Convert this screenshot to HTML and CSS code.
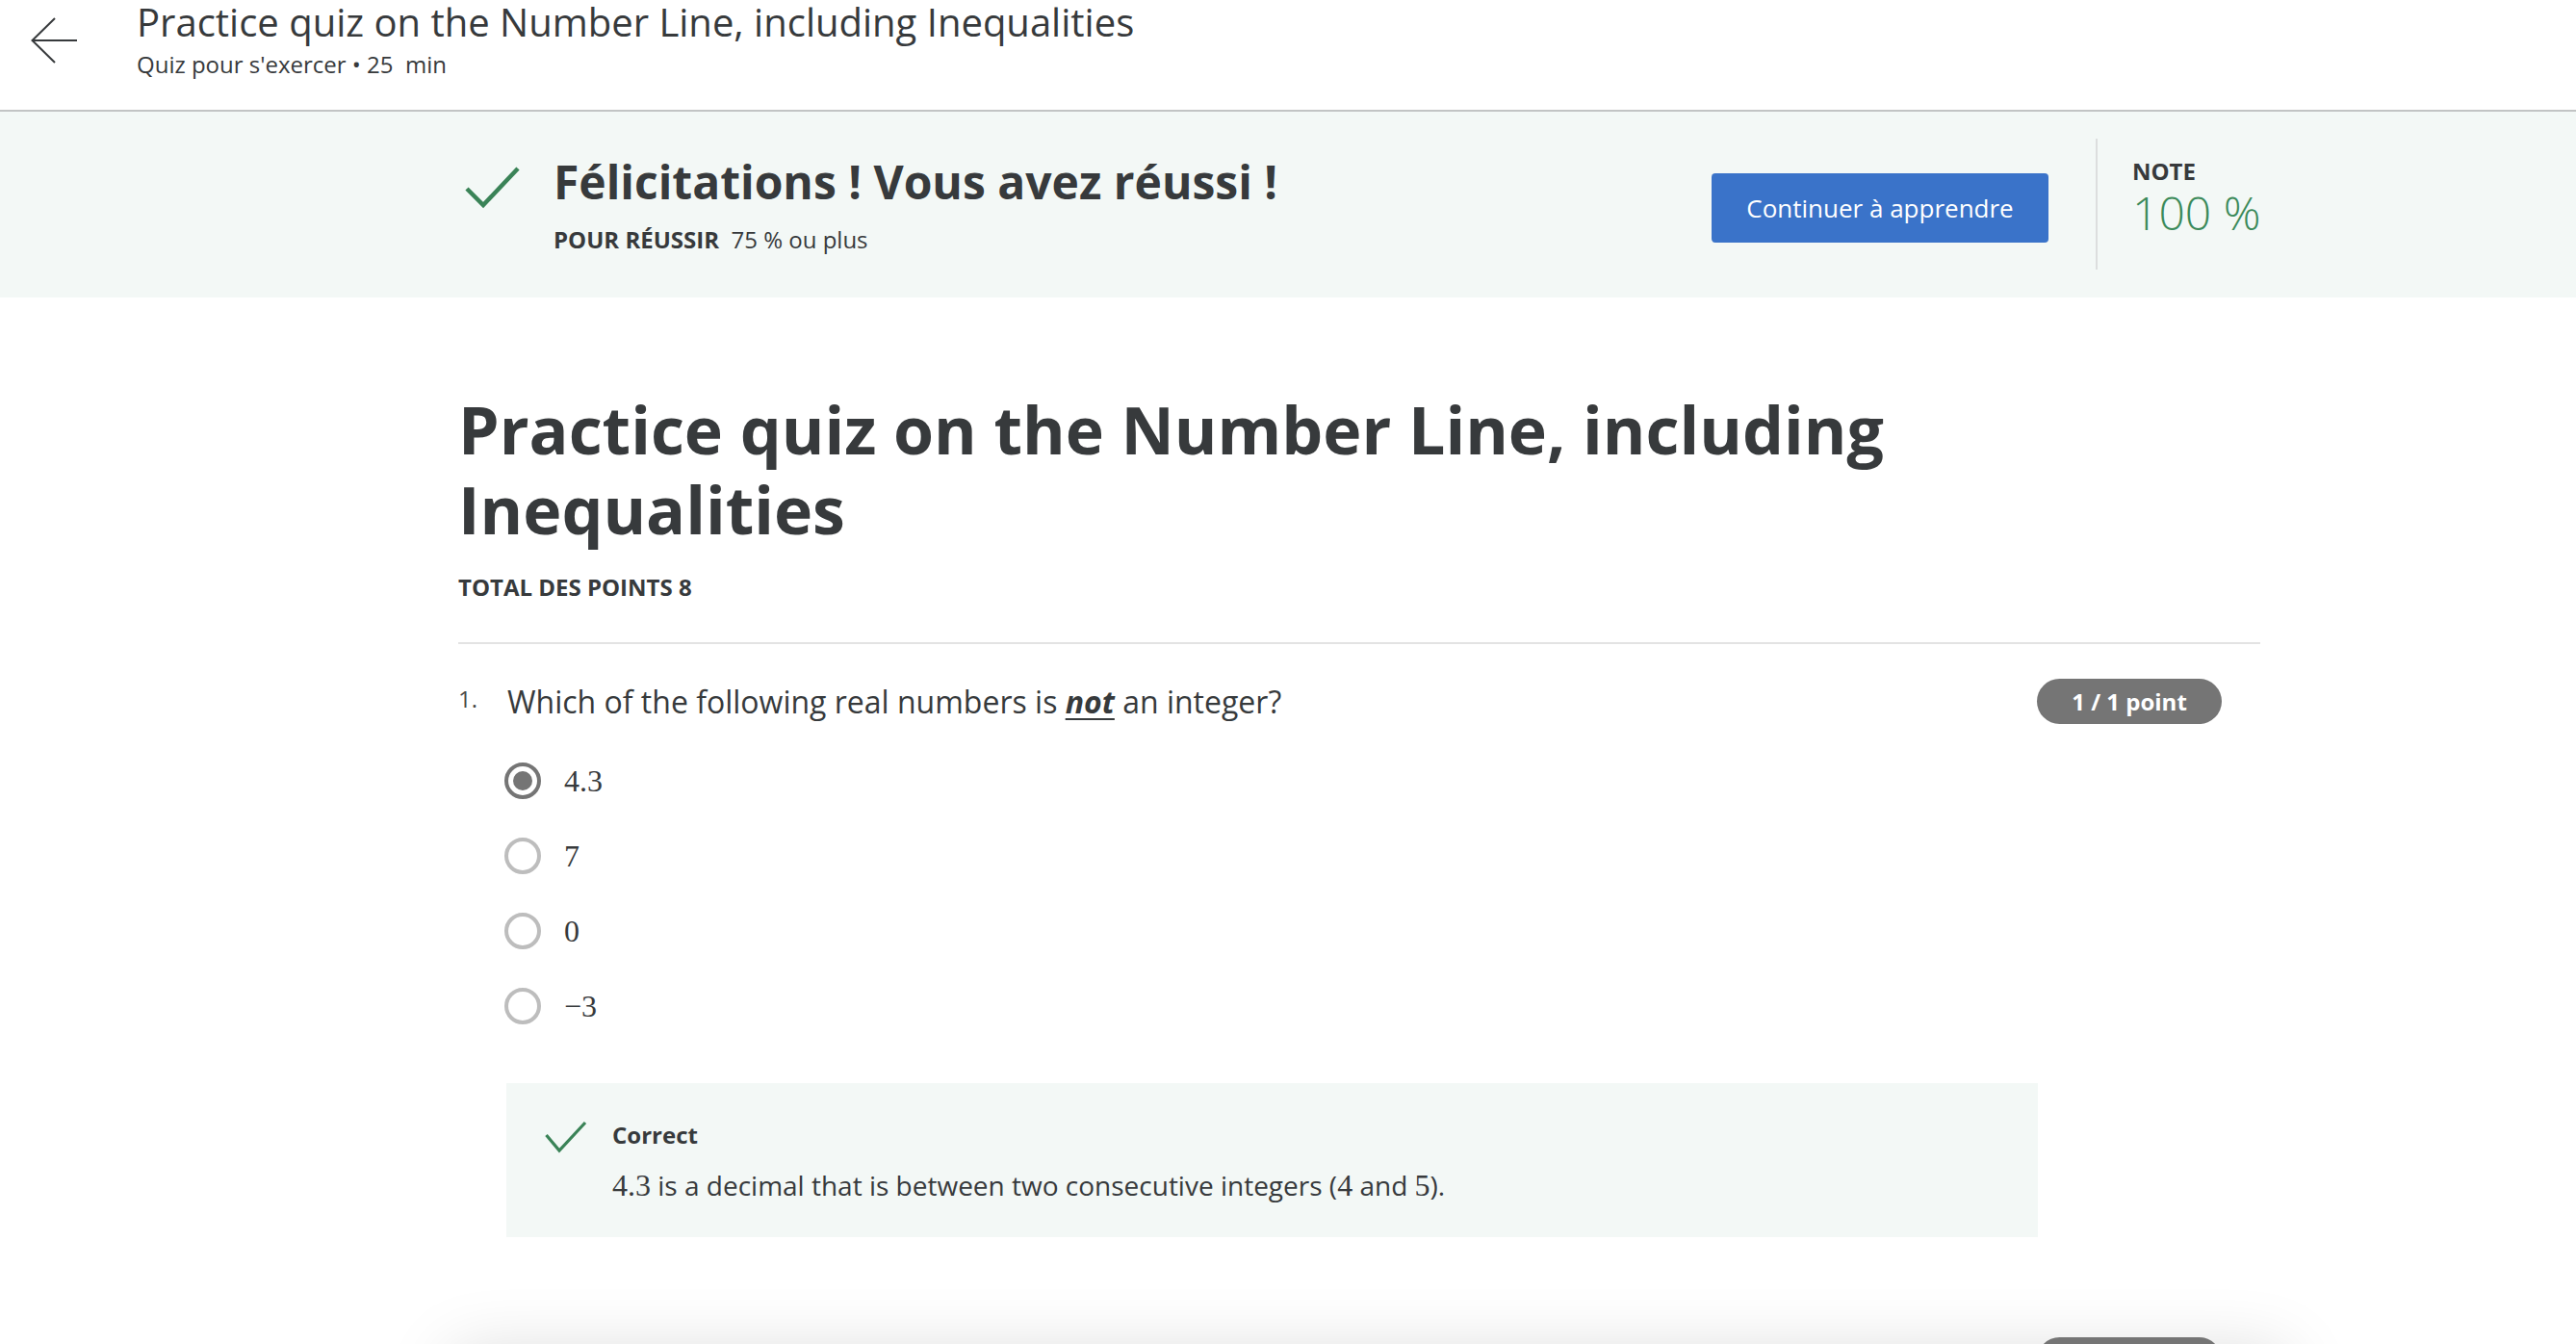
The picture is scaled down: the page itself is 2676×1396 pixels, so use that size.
FILE: index.html
```html
<!DOCTYPE html>
<html lang="fr">
<head>
<meta charset="utf-8">
<title>Practice quiz on the Number Line, including Inequalities</title>
<link rel="stylesheet" href="styles.css">
</head>
<body>
<header class="topbar">
  <a class="back" href="#" aria-label="Retour">
    <svg width="50" height="50" viewBox="0 0 50 50"><path d="M48 25H1.5M25 2L1.5 25L25 48" fill="none" stroke="#373a3c" stroke-width="2"/></svg>
  </a>
  <div class="topbar-text">
    <div class="topbar-title">Practice quiz on the Number Line, including Inequalities</div>
    <div class="topbar-sub">Quiz pour s'exercer • 25&nbsp; min</div>
  </div>
</header>

<section class="band">
  <div class="band-inner">
    <div class="congrats">
      <svg class="congrats-check" width="58" height="44" viewBox="0 0 58 44"><polyline points="2,23 19,40 55,2" fill="none" stroke="#3a8357" stroke-width="4.5"/></svg>
      <div class="congrats-text">
        <div class="congrats-title">Félicitations ! Vous avez réussi !</div>
        <div class="congrats-sub"><span class="label">POUR RÉUSSIR</span>&nbsp; 75 % ou plus</div>
      </div>
    </div>
    <button class="btn-primary">Continuer à apprendre</button>
    <div class="score">
      <div class="score-label">NOTE</div>
      <div class="score-value">100 %</div>
    </div>
  </div>
</section>

<main class="quiz">
  <h1 class="quiz-title">Practice quiz on the Number Line, including Inequalities</h1>
  <div class="total">TOTAL DES POINTS 8</div>
  <div class="divider"></div>

  <div class="question">
    <div class="q-num">1.</div>
    <div class="q-body">
      <div class="q-text">Which of the following real numbers is <em class="emph">not</em> an integer?</div>
      <ul class="options">
        <li class="option"><span class="radio checked"></span><span class="math">4.3</span></li>
        <li class="option"><span class="radio"></span><span class="math">7</span></li>
        <li class="option"><span class="radio"></span><span class="math">0</span></li>
        <li class="option"><span class="radio"></span><span class="math">−3</span></li>
      </ul>
      <div class="feedback">
        <svg class="feedback-check" width="44" height="34" viewBox="0 0 44 34"><polyline points="1.5,15 15,31 42,2" fill="none" stroke="#3a8357" stroke-width="3.2"/></svg>
        <div class="feedback-text">
          <div class="feedback-title">Correct</div>
          <div class="feedback-body"><span class="math">4.3</span> is a decimal that is between two consecutive integers (<span class="math">4</span> and <span class="math">5</span>).</div>
        </div>
      </div>
    </div>
    <div class="badge">1 / 1 point</div>
  </div>

  <div class="question next">
    <div class="q-num"></div>
    <div class="q-body"></div>
    <div class="badge badge-empty"></div>
  </div>
</main>
<div class="bottom-shade"></div>
</body>
</html>
```

FILE: styles.css
```css
html {
  margin: 0;
  padding: 0;
  background: #ffffff;
}
body {
  margin: 0;
  padding: 0;
  font-family: "Open Sans", "Noto Sans", sans-serif;
  color: #373a3c;
  height: 1396px;
  overflow: hidden;
  position: relative;
}

/* top bar */
.topbar {
  display: flex;
  align-items: flex-start;
  box-sizing: border-box;
  height: 116px;
  padding-top: 1px;
  border-bottom: 2px solid #c2c4c4;
  background: #fff;
}
.back {
  display: block;
  width: 50px;
  height: 50px;
  margin: 16px 60px 0 32px;
}
.back svg { display: block; }
.topbar-title {
  font-size: 40px;
  line-height: 44px;
  font-weight: 400;
  color: #373a3c;
}
.topbar-sub {
  font-size: 24px;
  line-height: 30px;
  margin-top: 7px;
  color: #373a3c;
}

/* success band */
.band {
  background: #f3f8f6;
  padding: 28px 0 29px;
}
.band-inner {
  margin-left: 476px;
  width: 1872px;
  height: 136px;
  display: flex;
  align-items: center;
}
.congrats {
  flex: 1;
  display: flex;
  align-items: flex-start;
}
.congrats-check {
  display: block;
  margin: 13px 34px 0 7px;
}
.congrats-title {
  font-size: 48px;
  line-height: 58px;
  font-weight: 700;
}
.congrats-sub {
  margin-top: 16px;
  font-size: 24px;
  line-height: 30px;
}
.congrats-sub .label {
  font-weight: 700;
}
.btn-primary {
  width: 350px;
  height: 72px;
  margin: 8px 49px 0 0;
  border: none;
  border-radius: 4px;
  background: #3a73c9;
  color: #fff;
  font-family: "Open Sans", sans-serif;
  font-size: 26px;
  font-weight: 400;
  cursor: pointer;
}
.score {
  box-sizing: border-box;
  height: 136px;
  width: 171px;
  border-left: 2px solid #dcdede;
  padding: 19px 0 0 36px;
  white-space: nowrap;
}
.score-label {
  font-size: 24px;
  line-height: 30px;
  font-weight: 700;
}
.score-value {
  font-size: 48px;
  line-height: 56px;
  font-weight: 300;
  color: #3b8a5a;
}

/* quiz body */
.quiz {
  margin-left: 476px;
  width: 1872px;
  padding-top: 95px;
}
.quiz-title {
  margin: 0;
  max-width: 1700px;
  font-size: 68px;
  line-height: 83px;
  font-weight: 700;
}
.total {
  margin-top: 25px;
  font-size: 24px;
  line-height: 30px;
  font-weight: 700;
}
.divider {
  margin-top: 42px;
  height: 2px;
  background: #e3e3e3;
}
.question {
  display: flex;
  align-items: flex-start;
  margin-top: 38px;
}
.q-num {
  width: 51px;
  margin-top: 4px;
  font-size: 24px;
  line-height: 30px;
  color: #4a4a4a;
}
.q-body {
  width: 1589px;
}
.q-text {
  font-size: 32px;
  line-height: 44px;
}
.emph {
  font-weight: 700;
  font-style: italic;
  text-decoration: underline;
  text-decoration-thickness: 2px;
  text-underline-offset: 5px;
}
.badge {
  margin-top: -2px;
  width: 192px;
  height: 47px;
  border-radius: 24px;
  background: #757575;
  color: #fff;
  font-size: 24px;
  font-weight: 700;
  line-height: 47px;
  text-align: center;
}
.options {
  list-style: none;
  margin: 21px 0 0 -3px;
  padding: 0;
}
.option {
  display: flex;
  align-items: center;
  height: 78px;
}
.radio {
  box-sizing: border-box;
  width: 38px;
  height: 38px;
  border-radius: 50%;
  border: 4px solid #bdbdbd;
  margin-right: 24px;
  display: flex;
  align-items: center;
  justify-content: center;
}
.radio.checked {
  border-color: #757575;
}
.radio.checked::after {
  content: "";
  width: 20px;
  height: 20px;
  border-radius: 50%;
  background: #757575;
}
.math {
  font-family: "Liberation Serif", "DejaVu Serif", serif;
  font-size: 32px;
  color: #373a3c;
}

.feedback {
  display: flex;
  align-items: flex-start;
  margin: 41px 0 0 -1px;
  width: 1591px;
  box-sizing: border-box;
  padding: 39px 0 34px 40px;
  background: #f3f8f6;
}
.feedback-check {
  display: block;
  margin: 0 26px 0 0;
}
.feedback-title {
  font-size: 24px;
  line-height: 30px;
  font-weight: 700;
}
.feedback-body {
  margin-top: 17px;
  font-size: 28px;
  line-height: 40px;
}
.feedback-body .math {
  font-size: 32px;
}

.question.next {
  margin-top: 106px;
}

.bottom-shade {
  position: absolute;
  z-index: -1;
  left: 470px;
  width: 1905px;
  top: 1405px;
  height: 200px;
  background: #eeeeee;
  box-shadow: 0 0 70px rgba(0, 0, 0, 0.15);
}
```
